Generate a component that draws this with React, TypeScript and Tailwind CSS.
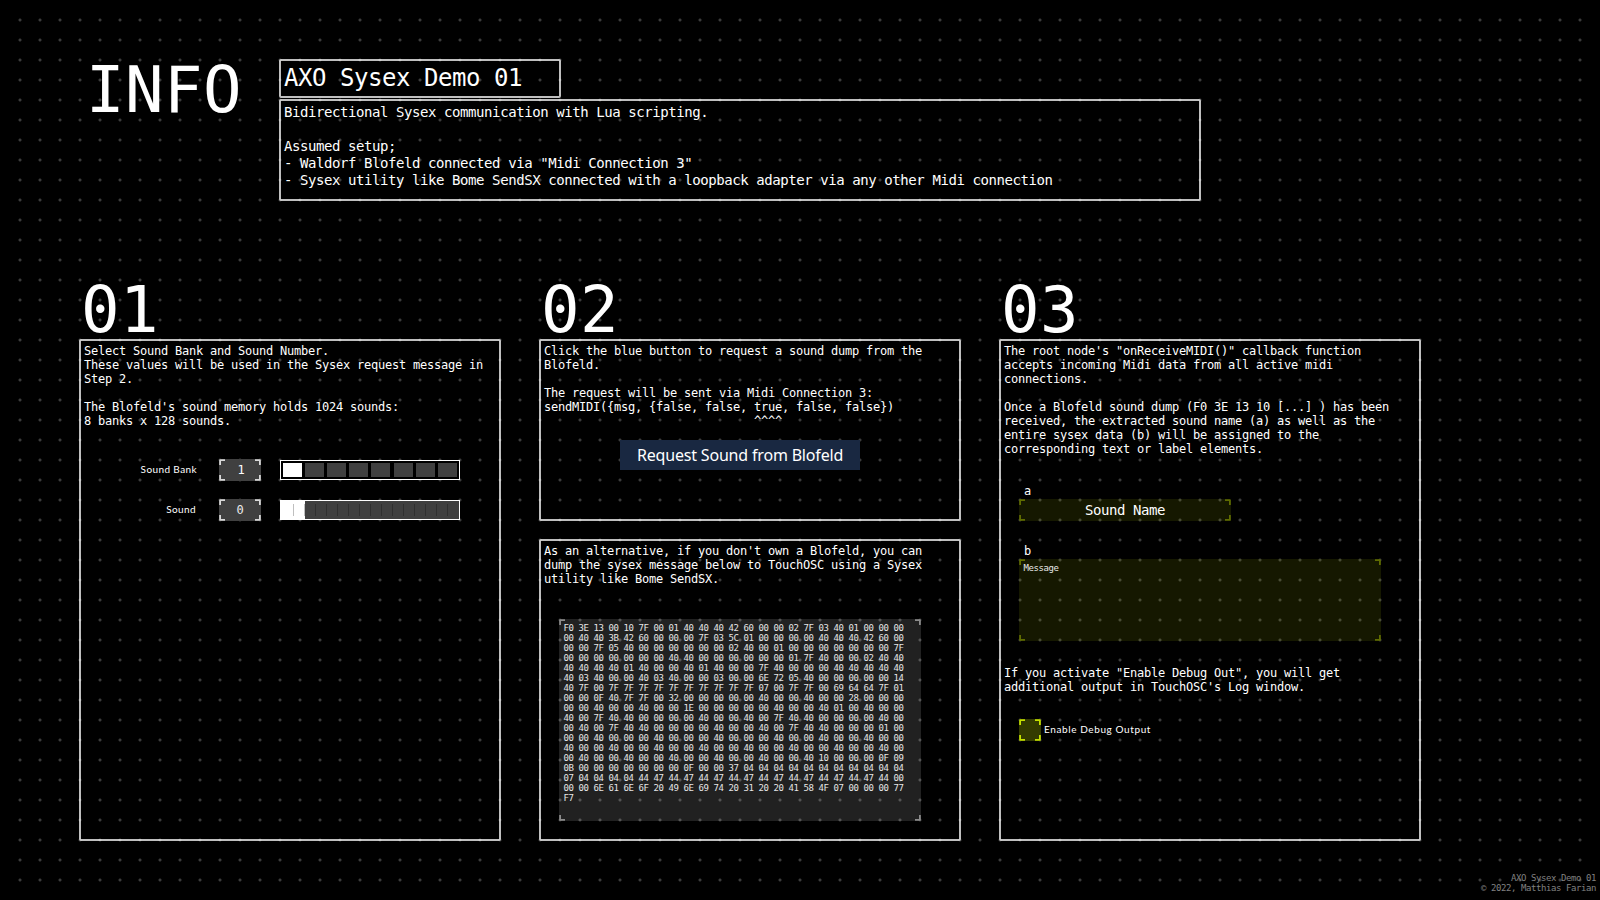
import React from "react";

const mono = "font-['DejaVu_Sans_Mono',monospace]";
const HEX = [
  "F0 3E 13 00 10 7F 00 01 40 40 40 42 60 00 00 02 7F 03 40 01 00 00 00",
  "00 40 40 3B 42 60 00 00 00 7F 03 5C 01 00 00 00 00 40 40 40 42 60 00",
  "00 00 7F 05 40 00 00 00 00 00 00 02 40 00 01 00 00 00 00 00 00 00 7F",
  "00 00 00 00 00 00 00 40 40 00 00 00 00 00 00 01 7F 40 00 00 02 40 40",
  "40 40 40 40 01 40 00 00 40 01 40 00 00 7F 40 00 00 00 40 40 40 40 40",
  "40 03 40 00 00 40 03 40 00 00 03 00 00 6E 72 05 40 00 00 00 00 00 14",
  "40 7F 00 7F 7F 7F 7F 7F 7F 7F 7F 7F 7F 07 00 7F 7F 00 69 64 64 7F 01",
  "00 00 0F 40 7F 7F 00 32 00 00 00 00 00 40 00 00 40 00 00 28 00 00 00",
  "00 00 40 00 00 40 00 00 1E 00 00 00 00 00 40 00 00 40 01 00 40 00 00",
  "40 00 7F 40 40 00 00 00 00 40 00 00 40 00 7F 40 40 00 00 00 00 40 00",
  "00 40 00 7F 40 40 00 00 00 00 40 00 00 40 00 7F 40 40 00 00 00 01 00",
  "00 00 40 00 00 00 40 00 00 00 40 00 00 00 40 00 00 40 00 00 40 00 00",
  "40 00 00 40 00 00 40 00 00 40 00 00 40 00 00 40 00 00 40 00 00 40 00",
  "00 40 00 00 40 00 00 40 00 00 40 00 00 40 00 00 40 10 00 00 00 0F 09",
  "0B 00 00 00 00 00 00 00 0F 00 00 37 04 04 04 04 04 04 04 04 04 04 04",
  "07 04 04 04 04 44 47 44 47 44 47 44 47 44 47 44 47 44 47 44 47 44 00",
  "00 00 6E 61 6E 6F 20 49 6E 69 74 20 31 20 20 41 58 4F 07 00 00 00 77",
  "F7",
].join("\n");

const CORNER_PLACES = [
  "left-0 top-0",
  "right-0 top-0 rotate-90",
  "bottom-0 right-0 rotate-180",
  "bottom-0 left-0 -rotate-90",
];

function Corners({ color }: { color: string }) {
  return (
    <>
      {CORNER_PLACES.map((place) => (
        <svg key={place} viewBox="0 0 6 6" className={`absolute size-[6px] fill-none ${color} ${place}`}>
          <path d="M1.1 6V1.1H6" strokeWidth="1.8" strokeLinejoin="round" />
        </svg>
      ))}
    </>
  );
}

function Panel({ className, children }: { className: string; children: React.ReactNode }) {
  return <div className={`rounded-[2px] border-2 border-white/75 ${className}`}>{children}</div>;
}

function Copy({ className = "", children }: { className?: string; children: string }) {
  return (
    <p className={`whitespace-pre text-[12px] leading-[14px] tracking-[-0.224px] ${className}`}>{children}</p>
  );
}

function BigNumber({ children }: { children: string }) {
  return <h2 className="h-[59px] pl-[2px] text-[64px] leading-[61px] tracking-[0.47px]">{children}</h2>;
}

function Label({ className, children }: { className: string; children: string }) {
  return (
    <span className={`whitespace-pre pb-[2px] font-[Lato,sans-serif] text-[10px] leading-[18px] ${className}`}>
      {children}
    </span>
  );
}

function ValueBox({ className = "", children }: { className?: string; children: string }) {
  return (
    <div
      className={`relative flex h-[22px] w-[42px] items-center justify-center rounded-[2px] bg-[#404040] text-[12px] leading-[14px] ${className}`}
    >
      <Corners color="stroke-[#d8d8d8]" />
      {children}
    </div>
  );
}

const CELLS = ["", "ml-[3px]", "ml-[3px]", "ml-[3px]", "ml-[3px]", "ml-[4px]", "ml-[3px]", "ml-[3px]"];

export default function App() {
  return (
    <div className={`relative h-[900px] w-[1600px] overflow-hidden bg-black text-white ${mono}`}>
      <div className="absolute inset-[10px] bg-[radial-gradient(circle_at_10px_10px,#3c3c3c_0.8px,transparent_2.1px)] bg-[size:20px_20px]" />
      <div className="relative flex h-full flex-col">
        <header className="flex h-[280px] pt-[59px]">
          <h1 className="w-[279px] pl-[86px] text-[64px] leading-[62px] tracking-[0.47px]">INFO</h1>
          <div>
            <Panel className="h-[39px] w-[282px] pl-[3px]">
              <p className="whitespace-pre text-[24px] leading-[34px] tracking-[-0.448px]">AXO Sysex Demo 01</p>
            </Panel>
            <Panel className="mt-px h-[102px] w-[922px] pl-[3px] pt-[3px]">
              <p className="whitespace-pre text-[14px] leading-[17px] tracking-[-0.424px]">
                {`Bidirectional Sysex communication with Lua scripting.

Assumed setup;
- Waldorf Blofeld connected via "Midi Connection 3"
- Sysex utility like Bome SendSX connected with a loopback adapter via any other Midi connection`}
              </p>
            </Panel>
          </div>
        </header>

        <main className="flex gap-[38px] pl-[79px]">
          <section>
            <BigNumber>01</BigNumber>
            <Panel className="h-[502px] w-[422px] pt-[3px]">
              <Copy className="pl-[3px]">
                {`Select Sound Bank and Sound Number.
These values will be used in the Sysex request message in
Step 2.

The Blofeld's sound memory holds 1024 sounds:
8 banks x 128 sounds.`}
              </Copy>
              <div className="mt-[31px] flex h-[22px] items-center">
                <Label className="w-[116px] text-right tracking-[0.4px]">Sound Bank</Label>
                <div className="ml-[22px]"><ValueBox className="pl-[2px]">1</ValueBox></div>
                <div className="ml-[19px] flex h-[20px] w-[180px] border border-white bg-black p-[2px]">
                  {CELLS.map((gap, i) => (
                    <span key={i} className={`h-[14px] w-[19px] ${gap} ${i === 0 ? "bg-white" : "bg-[#404040]"}`} />
                  ))}
                </div>
              </div>
              <div className="mt-[18px] flex h-[22px] items-center">
                <Label className="w-[115px] text-right tracking-[0.4px]">Sound</Label>
                <div className="ml-[23px]"><ValueBox className="text-white/90">0</ValueBox></div>
                <div className="ml-[19px] h-[20px] w-[180px] border border-white bg-[#404040]">
                  <div className="flex h-full items-center bg-[linear-gradient(white,white)] bg-[size:24px_100%] bg-no-repeat pl-[12px]">
                    {Array.from({ length: 15 }, (_, i) => (
                      <span key={i} className="mr-[10px] h-[12px] w-px shrink-0 bg-black/25" />
                    ))}
                  </div>
                </div>
              </div>
            </Panel>
          </section>

          <section>
            <BigNumber>02</BigNumber>
            <Panel className="h-[182px] w-[422px] pt-[3px]">
              <Copy className="pl-[3px]">
                {`Click the blue button to request a sound dump from the
Blofeld.

The request will be sent via Midi Connection 3:
sendMIDI({msg, {false, false, true, false, false})
                              ^^^^`}
              </Copy>
              <button className="ml-[79px] mt-[12px] flex h-[30px] w-[240px] items-center justify-center bg-[#192841] font-['Noto_Sans',sans-serif] text-[16px] tracking-[-0.18px]">
                <span className="whitespace-pre">Request Sound from Blofeld</span>
              </button>
            </Panel>
            <Panel className="mt-[18px] h-[302px] w-[422px] pt-[3px]">
              <Copy className="pl-[3px]">
                {`As an alternative, if you don't own a Blofeld, you can
dump the sysex message below to TouchOSC using a Sysex
utility like Bome SendSX.`}
              </Copy>
              <div className="relative ml-[18px] mt-[33px] h-[202px] w-[362px] rounded-[2px] bg-white/[0.13] pl-[4.5px] pt-[4px]">
                <Corners color="stroke-[#8c8c8c]" />
                <pre className={`text-[9px] leading-[10px] tracking-[-0.418px] text-[#e6e6e6] ${mono}`}>{HEX}</pre>
              </div>
            </Panel>
          </section>

          <section>
            <BigNumber>03</BigNumber>
            <Panel className="h-[502px] w-[422px] pt-[3px]">
              <Copy className="pl-[3px]">
                {`The root node's "onReceiveMIDI()" callback function
accepts incoming Midi data from all active midi
connections.

Once a Blofeld sound dump (F0 3E 13 10 [...] ) has been
received, the extracted sound name (a) as well as the
entire sysex data (b) will be assigned to the
corresponding text or label elements.`}
              </Copy>
              <Copy className="ml-[23px] mt-[28px]">a</Copy>
              <div className="relative ml-[18px] mt-px flex h-[22px] w-[212px] items-center justify-center rounded-[2px] bg-[#afc800]/[0.12]">
                <Corners color="stroke-[#5f6c00]" />
                <span className="text-[14px] leading-[17px] tracking-[-0.428px]">Sound Name</span>
              </div>
              <Copy className="ml-[23px] mt-[23px]">b</Copy>
              <div className="relative ml-[18px] mt-px h-[82px] w-[362px] rounded-[2px] bg-[#afc800]/[0.12] pl-[4.5px] pt-[4px]">
                <Corners color="stroke-[#5f6c00]" />
                <p className="text-[9px] leading-[10px] tracking-[-0.418px] text-[#e6e6e6]">Message</p>
              </div>
              <Copy className="mt-[25px] pl-[3px]">
                {`If you activate "Enable Debug Out", you will get
additional output in TouchOSC's Log window.`}
              </Copy>
              <div className="ml-[18px] mt-[25px] flex h-[22px] items-center">
                <div className="relative size-[22px] rounded-[2px] bg-[#343c00]">
                  <Corners color="stroke-[#c4e000]" />
                </div>
                <Label className="ml-[3px] tracking-[0.6px]">Enable Debug Output</Label>
              </div>
            </Panel>
          </section>
        </main>
        <footer className="absolute bottom-[7px] right-[4px] whitespace-pre text-right text-[9px] leading-[10px] tracking-[-0.418px] text-[#808080]">
          {"AXO Sysex Demo 01\n© 2022, Matthias Farian"}
        </footer>
      </div>
    </div>
  );
}
